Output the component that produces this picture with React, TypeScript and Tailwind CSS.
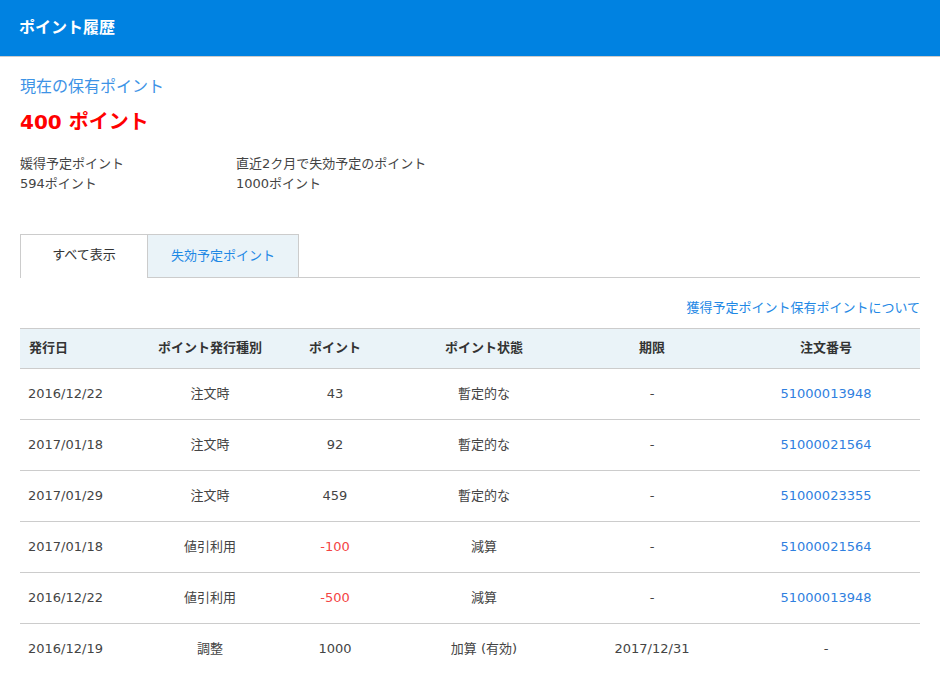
import React from "react";

const FONT = "font-['DejaVu_Sans','Noto_Sans_CJK_JP',sans-serif]";

type Row = {
  date: string;
  kind: string;
  points: string;
  status: string;
  limit: string;
  order: string;
};

const ROWS: Row[] = [
  { date: "2016/12/22", kind: "注文時", points: "43", status: "暫定的な", limit: "-", order: "51000013948" },
  { date: "2017/01/18", kind: "注文時", points: "92", status: "暫定的な", limit: "-", order: "51000021564" },
  { date: "2017/01/29", kind: "注文時", points: "459", status: "暫定的な", limit: "-", order: "51000023355" },
  { date: "2017/01/18", kind: "値引利用", points: "-100", status: "減算", limit: "-", order: "51000021564" },
  { date: "2016/12/22", kind: "値引利用", points: "-500", status: "減算", limit: "-", order: "51000013948" },
  { date: "2016/12/19", kind: "調整", points: "1000", status: "加算 (有効)", limit: "2017/12/31", order: "-" },
];

export default function App() {
  return (
    <div className={`w-[940px] h-[680px] overflow-hidden bg-white text-[#444444] ${FONT}`}>
      <header className="h-[57px] bg-[#0082e1] border-b border-[#cccccc] flex items-center px-5 pb-[1px]">
        <h1 className="text-base font-bold text-white -ml-px">ポイント履歴</h1>
      </header>

      <main className="px-5">
        <h2 className="mt-[18px] text-base leading-[24px] text-[#3d93e6]">現在の保有ポイント</h2>
        <p className="mt-[8px] text-[20px] leading-[30px] font-bold text-[#ff0000]">400 ポイント</p>

        <div className="mt-[17px] flex text-[13px] leading-[20px]">
          <div className="w-[216px]">
            <p>媛得予定ポイント</p>
            <p>594ポイント</p>
          </div>
          <div>
            <p>直近2ク月で失効予定のポイント</p>
            <p>1000ポイント</p>
          </div>
        </div>

        <div className="mt-[40px] flex h-[44px] border-b border-[#cccccc] text-[13px]">
          <div className="w-[128px] h-[44px] pb-[3px] flex items-center justify-center bg-white border border-b-0 border-[#cccccc] text-[#333333]">
            すべて表示
          </div>
          <div className="w-[151px] h-[43px] pb-[1px] flex items-center justify-center bg-[#eaf3f8] border border-l-0 border-b-0 border-[#cccccc] text-[#1e88e5]">
            失効予定ポイント
          </div>
        </div>

        <div className="mt-[18px] h-[32px] text-right text-[13px] leading-[24px] text-[#1e88e5]">
          獲得予定ポイント保有ポイントについて
        </div>

        <table className="w-[900px] table-fixed border-collapse text-[13px]">
          <colgroup>
            <col className="w-[126px]" />
            <col className="w-[128px]" />
            <col className="w-[122px]" />
            <col className="w-[176px]" />
            <col className="w-[160px]" />
            <col className="w-[188px]" />
          </colgroup>
          <thead>
            <tr className="h-[40px] bg-[#eaf3f8] border-y border-[#cccccc] text-[#333333]">
              <th className="pl-[9px] pb-[2px] text-left font-bold">発行日</th>
              <th className="pb-[2px] font-bold">ポイント発行種別</th>
              <th className="pb-[2px] font-bold">ポイント</th>
              <th className="pb-[2px] font-bold">ポイント状態</th>
              <th className="pb-[2px] font-bold">期限</th>
              <th className="pb-[2px] font-bold">注文番号</th>
            </tr>
          </thead>
          <tbody>
            {ROWS.map((row, idx) => (
              <tr key={idx} className="h-[51px] border-b border-[#cccccc] last:border-b-0 text-center [&:last-child>td]:pb-[2px]">
                <td className="pl-[8px] text-left">{row.date}</td>
                <td>{row.kind}</td>
                <td className={row.points.startsWith("-") ? "text-[#f44444]" : ""}>{row.points}</td>
                <td>{row.status}</td>
                <td>{row.limit}</td>
                <td className={row.order === "-" ? "" : "text-[#2f80e0]"}>{row.order}</td>
              </tr>
            ))}
          </tbody>
        </table>
      </main>
    </div>
  );
}
